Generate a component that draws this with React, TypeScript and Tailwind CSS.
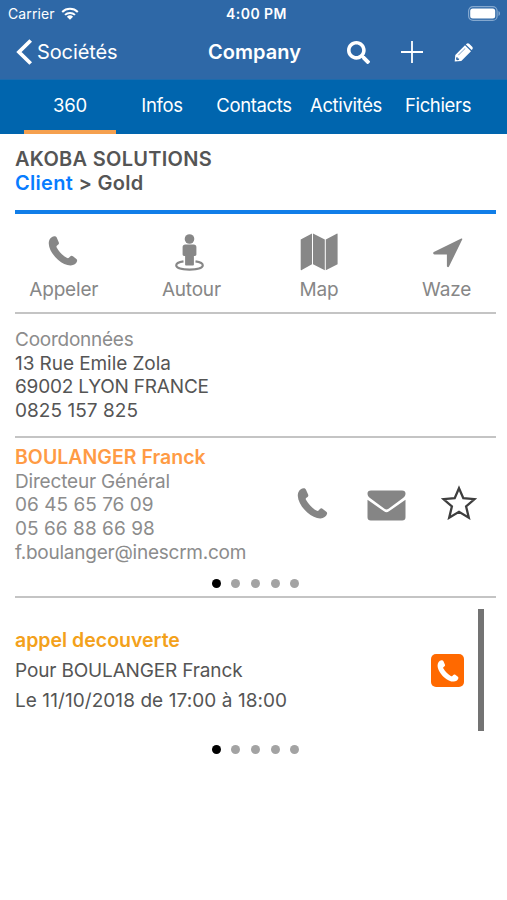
import React from "react";
import { FaSearch } from "react-icons/fa";

function Handset({ className }: { className: string }) {
  return (
    <svg viewBox="0 0 30 31" className={className} fill="currentColor">
      <path d="M6 .3C2.500.7.200 3.800.300 8c.2 5.500 4.200 11.800 9.500 16.500 4.300 3.800 9 6 13.200 5.900 3.200-.1 5.700-1.700 6.500-4.300.3-1.200 0-2-1-2.700L25.300 20.900c-1.100-.8-2-.7-2.900.2l-1.300 1.400c-.6.6-1.300.6-2.200.1-3.800-2-8-6.500-10.300-10.500-.6-1-.5-1.700.3-2.300l1.200-.9c.8-.6.900-1.500.5-2.500L8.600 1.900C8.100.7 7.300.2 6 .3Z" />
    </svg>
  );
}

function Wifi() {
  return (
    <svg viewBox="0 0 18 13" className="ml-[6px] h-[13px] w-[18px]" fill="none" stroke="white" strokeWidth="2">
      <path d="M1.200 5A11.200 11.200 0 0 1 16.800 5M4 7.900a7.200 7.200 0 0 1 10 0" />
      <path d="M5.900 9.700a4.500 4.500 0 0 1 6.200 0L9 12.700Z" fill="white" stroke="none" />
    </svg>
  );
}

function Dots() {
  return (
    <div className="flex justify-center gap-[10.600px]">
      {[0, 1, 2, 3, 4].map((i) => (
        <span key={i} className={i === 0 ? "size-[9px] rounded-full bg-black" : "size-[9px] rounded-full bg-[#a3a3a3]"} />
      ))}
    </div>
  );
}

function Action({ label, children }: { label: string; children: React.ReactNode }) {
  return (
    <button className="flex w-[127.600px] shrink-0 flex-col items-center">
      <span className="flex h-[46px] items-center justify-center">{children}</span>
      <span className="pt-px leading-[28px]">{label}</span>
    </button>
  );
}

export default function App() {
  return (
    <div className="h-[900px] w-[507px] overflow-hidden bg-white font-['Inter','Liberation_Sans',sans-serif] text-[19px] tracking-[-0.2px] text-[#555]">
      <header className="h-[79px] bg-[#2e68a7] text-white">
        <div className="grid h-[27px] grid-cols-3 items-center px-[8px]">
          <div className="flex items-center text-[14px] tracking-[0.1px]">Carrier<Wifi /></div>
          <div className="pl-[6px] text-center text-[14px] font-semibold tracking-[0.450px]">4:00 PM</div>
          <svg viewBox="0 0 33 15" className="mr-[-2px] h-[15px] w-[33px] justify-self-end">
            <rect x=".6" y=".6" width="28.500" height="13.800" rx="4.500" fill="none" stroke="#84a8cf" strokeWidth="1.200" />
            <rect x="2.200" y="2.500" width="25" height="10" rx="2.500" fill="white" />
            <path d="M30.500 5v5c2-.8 2-4.200 0-5Z" fill="#84a8cf" />
          </svg>
        </div>
        <div className="flex h-[50px] items-center pl-[16px]">
          <svg viewBox="0 0 17 26" className="h-[26px] w-[17px]" fill="none" stroke="white" strokeWidth="3.800">
            <path d="M14.700 1.500 3 13l11.700 11.500" />
          </svg>
          <span className="w-[175px] pl-[4px] text-[20px] tracking-[-0.100px]">Sociétés</span>
          <h1 className="w-[139px] text-[20px] font-semibold tracking-[0.030px]">Company</h1>
          <FaSearch className="size-[23px]" />
          <svg viewBox="0 0 22 22" className="ml-[31px] h-[22px] w-[22px]" stroke="white" strokeWidth="1.800">
            <path d="M0 11h22M11 0v22" />
          </svg>
          <svg viewBox="0 0 19 19" className="ml-[31px] h-[19px] w-[19px]" fill="white">
            <path fillRule="evenodd" d="M1.300 11.900 11 2.300l6 6-9.700 9.600L.7 18.600Zm1.100 2.300-.4 2 1.100 1 2-.4v-1.300H3.600v-1.300Zm2.200-1.900 6.800-6.700-.4-.4-6.800 6.800Z" />
            <path d="m11.900 1.400.7-.6c.8-.8 1.800-.8 2.600 0l3 3c.8.8.8 1.800 0 2.600l-.6.700Z" />
          </svg>
        </div>
      </header>
      <nav className="flex h-[55px] items-stretch border-t border-[#1d6bad] bg-[#0065ae] pl-[24px] text-[18.500px] tracking-[-0.350px] text-white">
        <span className="flex w-[92px] items-center justify-center border-b-4 border-[#f5a04f] pt-[2px] tracking-[-0.200px]">360</span>
        <span className="flex w-[92px] items-center justify-center pb-[2px]">Infos</span>
        <span className="flex w-[92px] items-center justify-center pb-[2px]">Contacts</span>
        <span className="flex w-[92px] items-center justify-center pb-[2px]">Activités</span>
        <span className="flex w-[92px] items-center justify-center pb-[2px]">Fichiers</span>
      </nav>
      <main className="pr-[11px] pl-[15px]">
        <section className="h-[80px] border-b-4 border-[#117ee8] pt-[13px] text-[20px] leading-[24px] font-semibold tracking-[0.290px]">
          <h2>AKOBA SOLUTIONS</h2>
          <p><span className="text-[#087cff]">Client</span> &gt; Gold</p>
        </section>
        <section className="-mx-[15px] flex h-[98px] pt-[15px] text-[#878787]">
          <Action label="Appeler"><Handset className="mt-[-3px] mr-[1px] h-[30px] w-[30px]" /></Action>
          <Action label="Autour">
            <svg viewBox="0 0 29 37" className="mr-[3px] h-[37px] w-[29px]" fill="currentColor">
              <circle cx="14.500" cy="5" r="4.800" />
              <path d="M10.300 10.500h8.400c1.700 0 2.700 1 2.700 2.600v7.100c0 1.100-.6 1.700-1.500 1.700h-1v8.500c0 .7-.5 1.100-1.200 1.100h-6.400c-.7 0-1.200-.4-1.200-1.100v-8.500h-1c-.9 0-1.500-.6-1.500-1.700v-7.100c0-1.600 1-2.600 2.700-2.600Z" />
              <path d="M8.500 27.400C4.300 28 1.200 29.300 1.200 31.300c0 2.800 6 4.300 13.300 4.300s13.300-1.500 13.300-4.300c0-2-3.100-3.300-7.300-3.900" fill="none" stroke="currentColor" strokeWidth="2.100" />
            </svg>
          </Action>
          <Action label="Map">
            <svg viewBox="0 0 38 38" className="h-[38px] w-[38px]" fill="currentColor">
              <path d="M.7 6.500 12 .5v30.700L1.700 37c-.7.400-1 .1-1-.6ZM13 .5l11.800 6v30.700L13 31.200ZM25.800 6.500 36.700.700c.6-.3.900-.1.900.5v30.100L25.800 37.200Z" />
            </svg>
          </Action>
          <Action label="Waze">
            <svg viewBox="0 0 30 30" className="mt-[2px] ml-[2px] h-[30px] w-[30px]" fill="currentColor"><path d="M.8 14 28.300.6c.8-.4 1.300.1.900.9L16 28.600c-.5 1-2.100.7-2.100-.5V16.400H1.500c-1.400 0-1.800-1.800-.7-2.400Z" /></svg>
          </Action>
        </section>
        <section className="h-[124px] border-t-2 border-[#c4c4c4] pt-[14px] leading-[23.700px]">
          <p className="tracking-[-0.250px] text-[#8c8c8c]">Coordonnées</p>
          <p className="tracking-[-0.070px]">13 Rue Emile Zola</p>
          <p>69002 LYON FRANCE</p>
          <p className="tracking-[0.050px]">0825 157 825</p>
        </section>
        <section className="h-[160px] border-t-2 border-[#c4c4c4] pt-[8px] leading-[23.700px] text-[#8c8c8c]">
          <div className="flex h-[133px]">
            <div className="w-[282px]">
              <p className="text-[19.500px] font-semibold tracking-[0.020px] text-[#ff9b45]">BOULANGER Franck</p>
              <p className="tracking-[-0.180px]">Directeur Général</p>
              <p className="tracking-[0.020px]">06 45 65 76 09</p>
              <p className="tracking-[0.050px]">05 66 88 66 98</p>
              <p className="tracking-[-0.240px]">f.boulanger@inescrm.com</p>
            </div>
            <div className="flex h-[114px] items-center text-[#858585]">
              <Handset className="h-[31px] w-[31px]" />
              <svg viewBox="0 0 39 31" className="mt-[5px] ml-[39px] h-[31px] w-[39px]" fill="currentColor">
                <path d="M4 .5h31c2.300 0 3.500 1.300 3.500 3.100 0 1.900-.8 3.300-2.500 4.500L21.500 18.700c-1.400 1-2.600 1-4 0L3 8.100C1.300 6.900.5 5.500.5 3.600.5 1.800 1.700.5 4 .5Z" />
                <path d="M.5 9.800 17 21.300c1.700 1.200 3.300 1.200 5 0L38.500 9.800V27.200c0 2.100-1.200 3.300-3.300 3.300H3.800C1.700 30.500.5 29.300.5 27.200Z" />
              </svg>
              <svg viewBox="0 0 36 35" className="mt-[-2px] ml-[35px] h-[35px] w-[36px]" fill="none" stroke="#3e3e3e" strokeWidth="2.300">
                <path d="m18 3.200 4.300 9.900 11.300 1-8.500 7.300 2.700 11.300L18 26.800l-9.800 5.900 2.700-11.300-8.500-7.300 11.300-1Z" />
              </svg>
            </div>
          </div>
          <Dots />
        </section>
        <section className="border-t-2 border-[#c4c4c4] pt-[11px]">
          <div className="flex h-[122px]">
            <div className="w-[416px] pt-[16px] leading-[30.700px]">
              <p className="text-[19.500px] font-semibold tracking-[0px] text-[#f3a11b]">appel decouverte</p>
              <p className="tracking-[-0.150px]">Pour BOULANGER Franck</p>
              <p className="tracking-[0.070px]">Le 11/10/2018 de 17:00 à 18:00</p>
            </div>
            <div className="mt-[45px] flex size-[33px] items-center justify-center rounded-[5px] bg-[#ff6900] text-white">
              <Handset className="h-[22px] w-[22px]" />
            </div>
            <div className="ml-[14px] w-[6px] bg-[#737373]" />
          </div>
          <div className="mt-[14px]"><Dots /></div>
        </section>
      </main>
    </div>
  );
}
